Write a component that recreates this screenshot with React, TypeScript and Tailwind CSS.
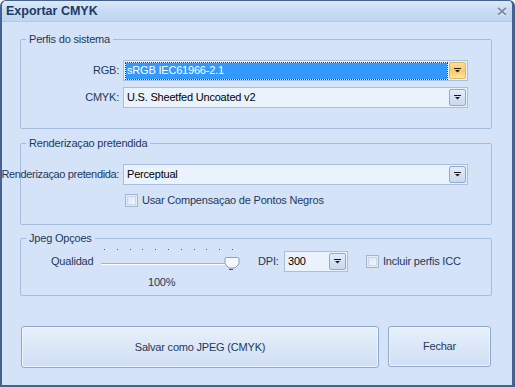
import React from "react";

const DropArrow = () => (
  <svg width="7" height="5" viewBox="0 0 7 5">
    <rect x="0" y="0" width="7" height="1" fill="#1b1b1b" />
    <polygon points="1,2 6,2 3.5,4.5" fill="#1b1b1b" />
  </svg>
);

const Combo = ({
  value,
  width,
  selected = false,
}: {
  value: string;
  width: string;
  selected?: boolean;
}) => {
  return (
    <div
      className={`${width} h-[21px] border border-[#a9bfdc] bg-[#eaf2fb] flex items-center pl-[2px] pr-[1px]`}
    >
      <div
        className={`flex-1 h-[16px] flex items-center pl-[1px] ${
          selected
            ? "bg-[#3399ff] text-white outline-1 outline-dotted outline-[#4a3b12]"
            : "text-black"
        }`}
      >
        {value}
      </div>
      <div
        className={`ml-[2px] w-[17px] h-[17px] rounded-[2px] border flex items-center justify-center ${
          selected
            ? "border-[#d9b56f] bg-gradient-to-b from-[#ffdf9a] via-[#ffc760] to-[#ffe8a6]"
            : "border-[#93a9cc] bg-gradient-to-b from-[#e3ecf8] to-[#c9d9ef]"
        }`}
      >
        <DropArrow />
      </div>
    </div>
  );
};

const CheckBox = () => (
  <div className="w-[13px] h-[13px] border border-[#a3b6d1] bg-[#e4ecf7] p-[1px]">
    <div className="w-full h-full border border-[#cbd8ea] bg-gradient-to-br from-[#dde7f4] to-[#f2f6fc]" />
  </div>
);

const Slider = () => {
  const ticks = Array.from({ length: 11 }, (_, i) => 5 + i * 12.8);
  return (
    <svg width="142" height="24" viewBox="0 0 142 24" className="mb-[6px]">
      {ticks.map((x) => (
        <rect key={x} x={Math.round(x)} y="2" width="1" height="1" fill="#4d5a6b" />
      ))}
      <rect x="2" y="16" width="134" height="1" fill="#9fb3cf" />
      <rect x="2" y="17" width="134" height="1" fill="#ffffff" />
      <path
        d="M127.5 10.5 h11 a1.5 1.5 0 0 1 1.5 1.5 v5 l-4 4 h-6 l-4 -4 v-5 a1.5 1.5 0 0 1 1.5 -1.5 z"
        fill="#f4f7fc"
        stroke="#8a9fbf"
      />
      <rect x="130" y="22" width="4" height="1" fill="#c000c0" />
    </svg>
  );
};

export default function App() {
  return (
    <div className="w-[515px] h-[387px] bg-white font-['Liberation_Sans',Arial,sans-serif] text-[11px] tracking-[-0.2px] leading-[13px]">
      <div className="w-[515px] h-[387px] rounded-t-[6px] border-t border-l-2 border-r-[3px] border-b-2 border-[#46618d] bg-[#d4e3f7] overflow-hidden flex flex-col">
        {/* title bar */}
        <div className="h-[21px] shrink-0 flex items-center justify-between bg-gradient-to-b from-[#dce8f8] via-[#c7dbf4] to-[#bfd5f1] border-b border-[#b3c9e6] pl-[4px] pr-[5px]">
          <span className="text-[12.5px] font-bold text-[#1d3a64] tracking-normal">
            Exportar CMYK
          </span>
          <svg width="10" height="9" viewBox="0 0 10 9" className="mt-[1px]">
            <path d="M1 1 L9 8 M9 1 L1 8" stroke="#ffffff" strokeWidth="2.2" transform="translate(0 0.8)" />
            <path d="M1 1 L9 8 M9 1 L1 8" stroke="#7b8da7" strokeWidth="1.8" />
          </svg>
        </div>

        <div className="flex flex-col pl-[18px] text-[#1e395b]">
          {/* Perfis do sistema */}
          <fieldset className="mt-[11px] w-[472px] h-[96px] min-w-0 border border-[#a6bedd] rounded-[2px] p-0 m-0">
            <legend className="ml-[5px] px-[3px] leading-[13px]">Perfis do sistema</legend>
            <div className="mt-[14px] flex items-center">
              <div className="w-[98px] flex justify-end">
                <span className="whitespace-nowrap">RGB:</span>
              </div>
              <div className="ml-[4px]">
                <Combo value="sRGB IEC61966-2.1" width="w-[345px]" selected />
              </div>
            </div>
            <div className="mt-[6px] flex items-center">
              <div className="w-[98px] flex justify-end">
                <span className="whitespace-nowrap">CMYK:</span>
              </div>
              <div className="ml-[4px]">
                <Combo value="U.S. Sheetfed Uncoated v2" width="w-[345px]" />
              </div>
            </div>
          </fieldset>

          {/* Renderizacao */}
          <fieldset className="mt-[8px] w-[472px] h-[88px] min-w-0 border border-[#a6bedd] rounded-[2px] p-0 m-0">
            <legend className="ml-[5px] px-[3px] leading-[13px]">Renderizaçao pretendida</legend>
            <div className="mt-[14px] flex items-center">
              <div className="w-[98px] flex justify-end">
                <span className="whitespace-nowrap tracking-[-0.35px]">Renderizaçao pretendida:</span>
              </div>
              <div className="ml-[4px]">
                <Combo value="Perceptual" width="w-[345px]" />
              </div>
            </div>
            <div className="mt-[9px] flex items-center ml-[104px]">
              <CheckBox />
              <span className="ml-[4px] whitespace-nowrap">Usar Compensaçao de Pontos Negros</span>
            </div>
          </fieldset>

          {/* Jpeg */}
          <fieldset className="mt-[7px] w-[472px] h-[64px] min-w-0 border border-[#a6bedd] rounded-[2px] p-0 m-0">
            <legend className="ml-[5px] px-[3px] leading-[13px]">Jpeg Opçoes</legend>
            <div className="mt-[6px] flex items-center h-[21px]">
              <span className="ml-[30px] w-[48px]">Qualidad</span>
              <Slider />
              <span className="ml-[17px] w-[26px]">DPI:</span>
              <Combo value="300" width="w-[64px]" />
              <div className="ml-[18px]">
                <CheckBox />
              </div>
              <span className="ml-[4px] whitespace-nowrap">Incluir perfis ICC</span>
            </div>
            <div className="mt-[4px] ml-[127px]">100%</div>
          </fieldset>

          {/* buttons */}
          <div className="mt-[30px] flex gap-[9px] pl-[1px]">
            <button className="w-[358px] h-[42px] rounded-[3px] border border-[#8fa9cc] bg-gradient-to-b from-[#e8f0fb] to-[#cfdff4] text-[#1e395b] shadow-[inset_0_0_0_1px_#eef4fc]">
              Salvar como JPEG (CMYK)
            </button>
            <button className="w-[103px] h-[41px] rounded-[3px] border border-[#8fa9cc] bg-gradient-to-b from-[#e8f0fb] to-[#cfdff4] text-[#1e395b] shadow-[inset_0_0_0_1px_#eef4fc]">
              Fechar
            </button>
          </div>
        </div>
      </div>
    </div>
  );
}
